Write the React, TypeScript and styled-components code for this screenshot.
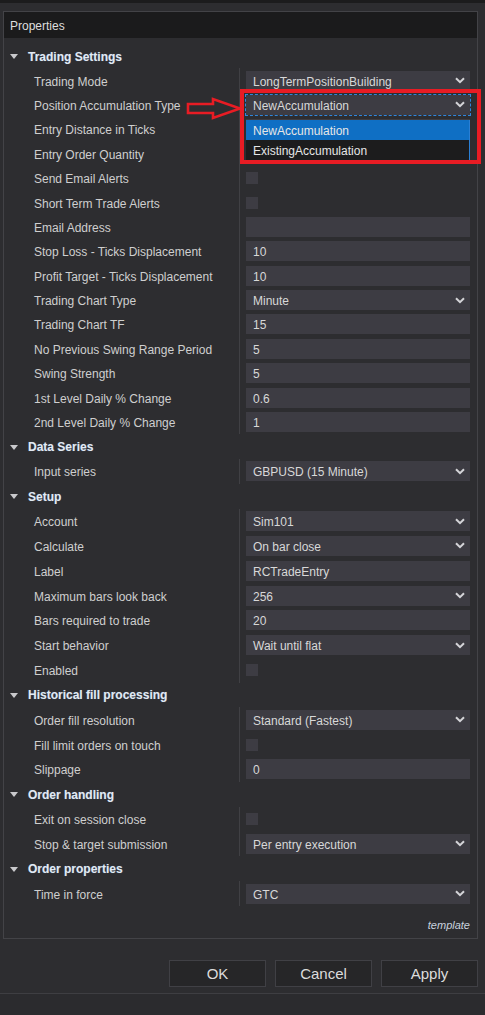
import React from "react";
import styled, { createGlobalStyle } from "styled-components";

const GlobalStyle = createGlobalStyle`
  html, body {
    margin: 0;
    padding: 0;
    background: #2d2d30;
  }
  body {
    font-family: "Liberation Sans", Arial, sans-serif;
    font-size: 12px;
    color: #d2d2d2;
  }
`;

const Window = styled.div`
  position: relative;
  width: 485px;
  height: 1015px;
  display: flex;
  flex-direction: column;
  background: #2d2d30;
  overflow: hidden;
`;

const TopStrip = styled.div`
  height: 3px;
  background: #1c1c1d;
  flex-shrink: 0;
`;

const Panel = styled.div`
  margin: 8px 7px 0 3px;
  border: 1px solid #434347;
  display: flex;
  flex-direction: column;
`;

const PanelHeader = styled.div`
  height: 26px;
  display: flex;
  align-items: center;
  padding: 1px 0 0 6px;
  box-sizing: border-box;
  background: #1b1b1c;
  color: #dedede;
  font-size: 12px;
`;

const PanelBody = styled.div`
  padding-top: 6px;
  display: flex;
  flex-direction: column;
`;

const Section = styled.div<{ $rowH: number }>`
  --row-h: ${(p) => p.$rowH}px;
  display: flex;
  flex-direction: column;
`;

const SectionHeader = styled.div`
  height: var(--row-h);
  display: flex;
  align-items: center;
  gap: 10px;
  padding: 1px 0 0 6px;
  box-sizing: border-box;
  font-weight: bold;
  color: #e2eaf3;
  text-shadow: 0 0 1px rgba(120, 170, 230, 0.45);
`;

const Caret = styled.span`
  width: 0;
  height: 0;
  border-left: 4px solid transparent;
  border-right: 4px solid transparent;
  border-top: 5px solid #c9c9cc;
`;

const Row = styled.div`
  height: var(--row-h);
  display: grid;
  grid-template-columns: 235px 1fr;
`;

const Label = styled.div`
  display: flex;
  align-items: center;
  padding: 2px 0 0 30px;
  box-sizing: border-box;
  white-space: nowrap;
  color: #cfcfcf;
`;

const ValueCell = styled.div`
  display: flex;
  align-items: center;
  border-left: 1px solid #404044;
  padding: 0 7px 0 6px;
`;

const Box = styled.div<{ $focused?: boolean }>`
  flex: 1;
  height: 20px;
  display: flex;
  align-items: center;
  justify-content: space-between;
  padding: 0 5px 0 7px;
  background: #3d3c43;
  color: #d8d8d8;
  white-space: nowrap;
  outline: ${(p) => (p.$focused ? "1px dashed #2f86dc" : "none")};
  outline-offset: 0;
`;

const BoxText = styled.span`
  padding-top: 2px;
`;

const Check = styled.div`
  width: 12px;
  height: 12px;
  background: #3d3c43;
`;

const Template = styled.div`
  padding: 13px 7px 6px 0;
  text-align: right;
  font-size: 11px;
  line-height: 13px;
  font-style: italic;
  color: #c9d2de;
`;

const ButtonBar = styled.div`
  display: flex;
  justify-content: flex-end;
  gap: 9px;
  padding: 21px 7px 6px 0;
`;

const DialogButton = styled.button`
  width: 97px;
  height: 27px;
  background: #262628;
  border: 1px solid #404045;
  color: #dcdcdc;
  font-family: "Liberation Sans", Arial, sans-serif;
  font-size: 15px;
  padding: 0;
`;

const BottomBar = styled.div`
  flex: 1;
  border-top: 1px solid #3e3e42;
  background: #2b2b2e;
`;

const Dropdown = styled.div`
  position: absolute;
  left: 246px;
  top: 120px;
  width: 223px;
  border-right: 1px solid #2a7fd4;
  display: flex;
  flex-direction: column;
`;

const DropdownItem = styled.div<{ $active?: boolean }>`
  height: 20px;
  display: flex;
  align-items: center;
  padding: 1px 0 0 7px;
  box-sizing: border-box;
  background: ${(p) => (p.$active ? "#0f6fc4" : "#1c1c1d")};
  color: #e6e6e6;
`;

const Highlight = styled.div`
  position: absolute;
  left: 240px;
  top: 89px;
  width: 233px;
  height: 67px;
  border: 4px solid #e81c24;
  pointer-events: none;
`;

const CalloutArrow = styled.svg`
  position: absolute;
  left: 186px;
  top: 96px;
`;

type Field = {
  label: string;
  kind: "combo" | "text" | "check";
  value?: string;
  focused?: boolean;
};

type SectionData = { title: string; rowH: number; fields: Field[] };

const sections: SectionData[] = [
  {
    title: "Trading Settings",
    rowH: 24.4,
    fields: [
      { label: "Trading Mode", kind: "combo", value: "LongTermPositionBuilding" },
      { label: "Position Accumulation Type", kind: "combo", value: "NewAccumulation", focused: true },
      { label: "Entry Distance in Ticks", kind: "text", value: "" },
      { label: "Entry Order Quantity", kind: "text", value: "" },
      { label: "Send Email Alerts", kind: "check" },
      { label: "Short Term Trade Alerts", kind: "check" },
      { label: "Email Address", kind: "text", value: "" },
      { label: "Stop Loss - Ticks Displacement", kind: "text", value: "10" },
      { label: "Profit Target - Ticks Displacement", kind: "text", value: "10" },
      { label: "Trading Chart Type", kind: "combo", value: "Minute" },
      { label: "Trading Chart TF", kind: "text", value: "15" },
      { label: "No Previous Swing Range Period", kind: "text", value: "5" },
      { label: "Swing Strength", kind: "text", value: "5" },
      { label: "1st Level Daily % Change", kind: "text", value: "0.6" },
      { label: "2nd Level Daily % Change", kind: "text", value: "1" },
    ],
  },
  {
    title: "Data Series",
    rowH: 24.83,
    fields: [{ label: "Input series", kind: "combo", value: "GBPUSD (15 Minute)" }],
  },
  {
    title: "Setup",
    rowH: 24.83,
    fields: [
      { label: "Account", kind: "combo", value: "Sim101" },
      { label: "Calculate", kind: "combo", value: "On bar close" },
      { label: "Label", kind: "text", value: "RCTradeEntry" },
      { label: "Maximum bars look back", kind: "combo", value: "256" },
      { label: "Bars required to trade", kind: "text", value: "20" },
      { label: "Start behavior", kind: "combo", value: "Wait until flat" },
      { label: "Enabled", kind: "check" },
    ],
  },
  {
    title: "Historical fill processing",
    rowH: 24.83,
    fields: [
      { label: "Order fill resolution", kind: "combo", value: "Standard (Fastest)" },
      { label: "Fill limit orders on touch", kind: "check" },
      { label: "Slippage", kind: "text", value: "0" },
    ],
  },
  {
    title: "Order handling",
    rowH: 24.83,
    fields: [
      { label: "Exit on session close", kind: "check" },
      { label: "Stop & target submission", kind: "combo", value: "Per entry execution" },
    ],
  },
  {
    title: "Order properties",
    rowH: 24.83,
    fields: [{ label: "Time in force", kind: "combo", value: "GTC" }],
  },
];

const Chevron = () => (
  <svg width="10" height="7" viewBox="0 0 10 7">
    <polyline points="1,1.2 5,5.2 9,1.2" fill="none" stroke="#d4d4d8" strokeWidth="2" />
  </svg>
);

const FieldValue: React.FC<{ field: Field }> = ({ field }) => {
  if (field.kind === "check") return <Check />;
  return (
    <Box $focused={field.focused}>
      <BoxText>{field.value}</BoxText>
      {field.kind === "combo" && <Chevron />}
    </Box>
  );
};

const App: React.FC = () => {
  return (
    <Window>
      <GlobalStyle />
      <TopStrip />
      <Panel>
        <PanelHeader>Properties</PanelHeader>
        <PanelBody>
          {sections.map((section) => (
            <Section key={section.title} $rowH={section.rowH}>
              <SectionHeader>
                <Caret />
                {section.title}
              </SectionHeader>
              {section.fields.map((field) => (
                <Row key={field.label}>
                  <Label>{field.label}</Label>
                  <ValueCell>
                    <FieldValue field={field} />
                  </ValueCell>
                </Row>
              ))}
            </Section>
          ))}
          <Template>template</Template>
        </PanelBody>
      </Panel>
      <ButtonBar>
        <DialogButton>OK</DialogButton>
        <DialogButton>Cancel</DialogButton>
        <DialogButton>Apply</DialogButton>
      </ButtonBar>
      <BottomBar />

      <Dropdown>
        <DropdownItem $active>NewAccumulation</DropdownItem>
        <DropdownItem>ExistingAccumulation</DropdownItem>
      </Dropdown>
      <Highlight />
      <CalloutArrow width="58" height="26" viewBox="0 0 58 26">
        <polygon
          points="2,8 27,8 27,3 54,12.5 27,22 27,17 2,17"
          fill="none"
          stroke="#e81c24"
          strokeWidth="2.6"
          strokeLinejoin="miter"
        />
      </CalloutArrow>
    </Window>
  );
};

export default App;
